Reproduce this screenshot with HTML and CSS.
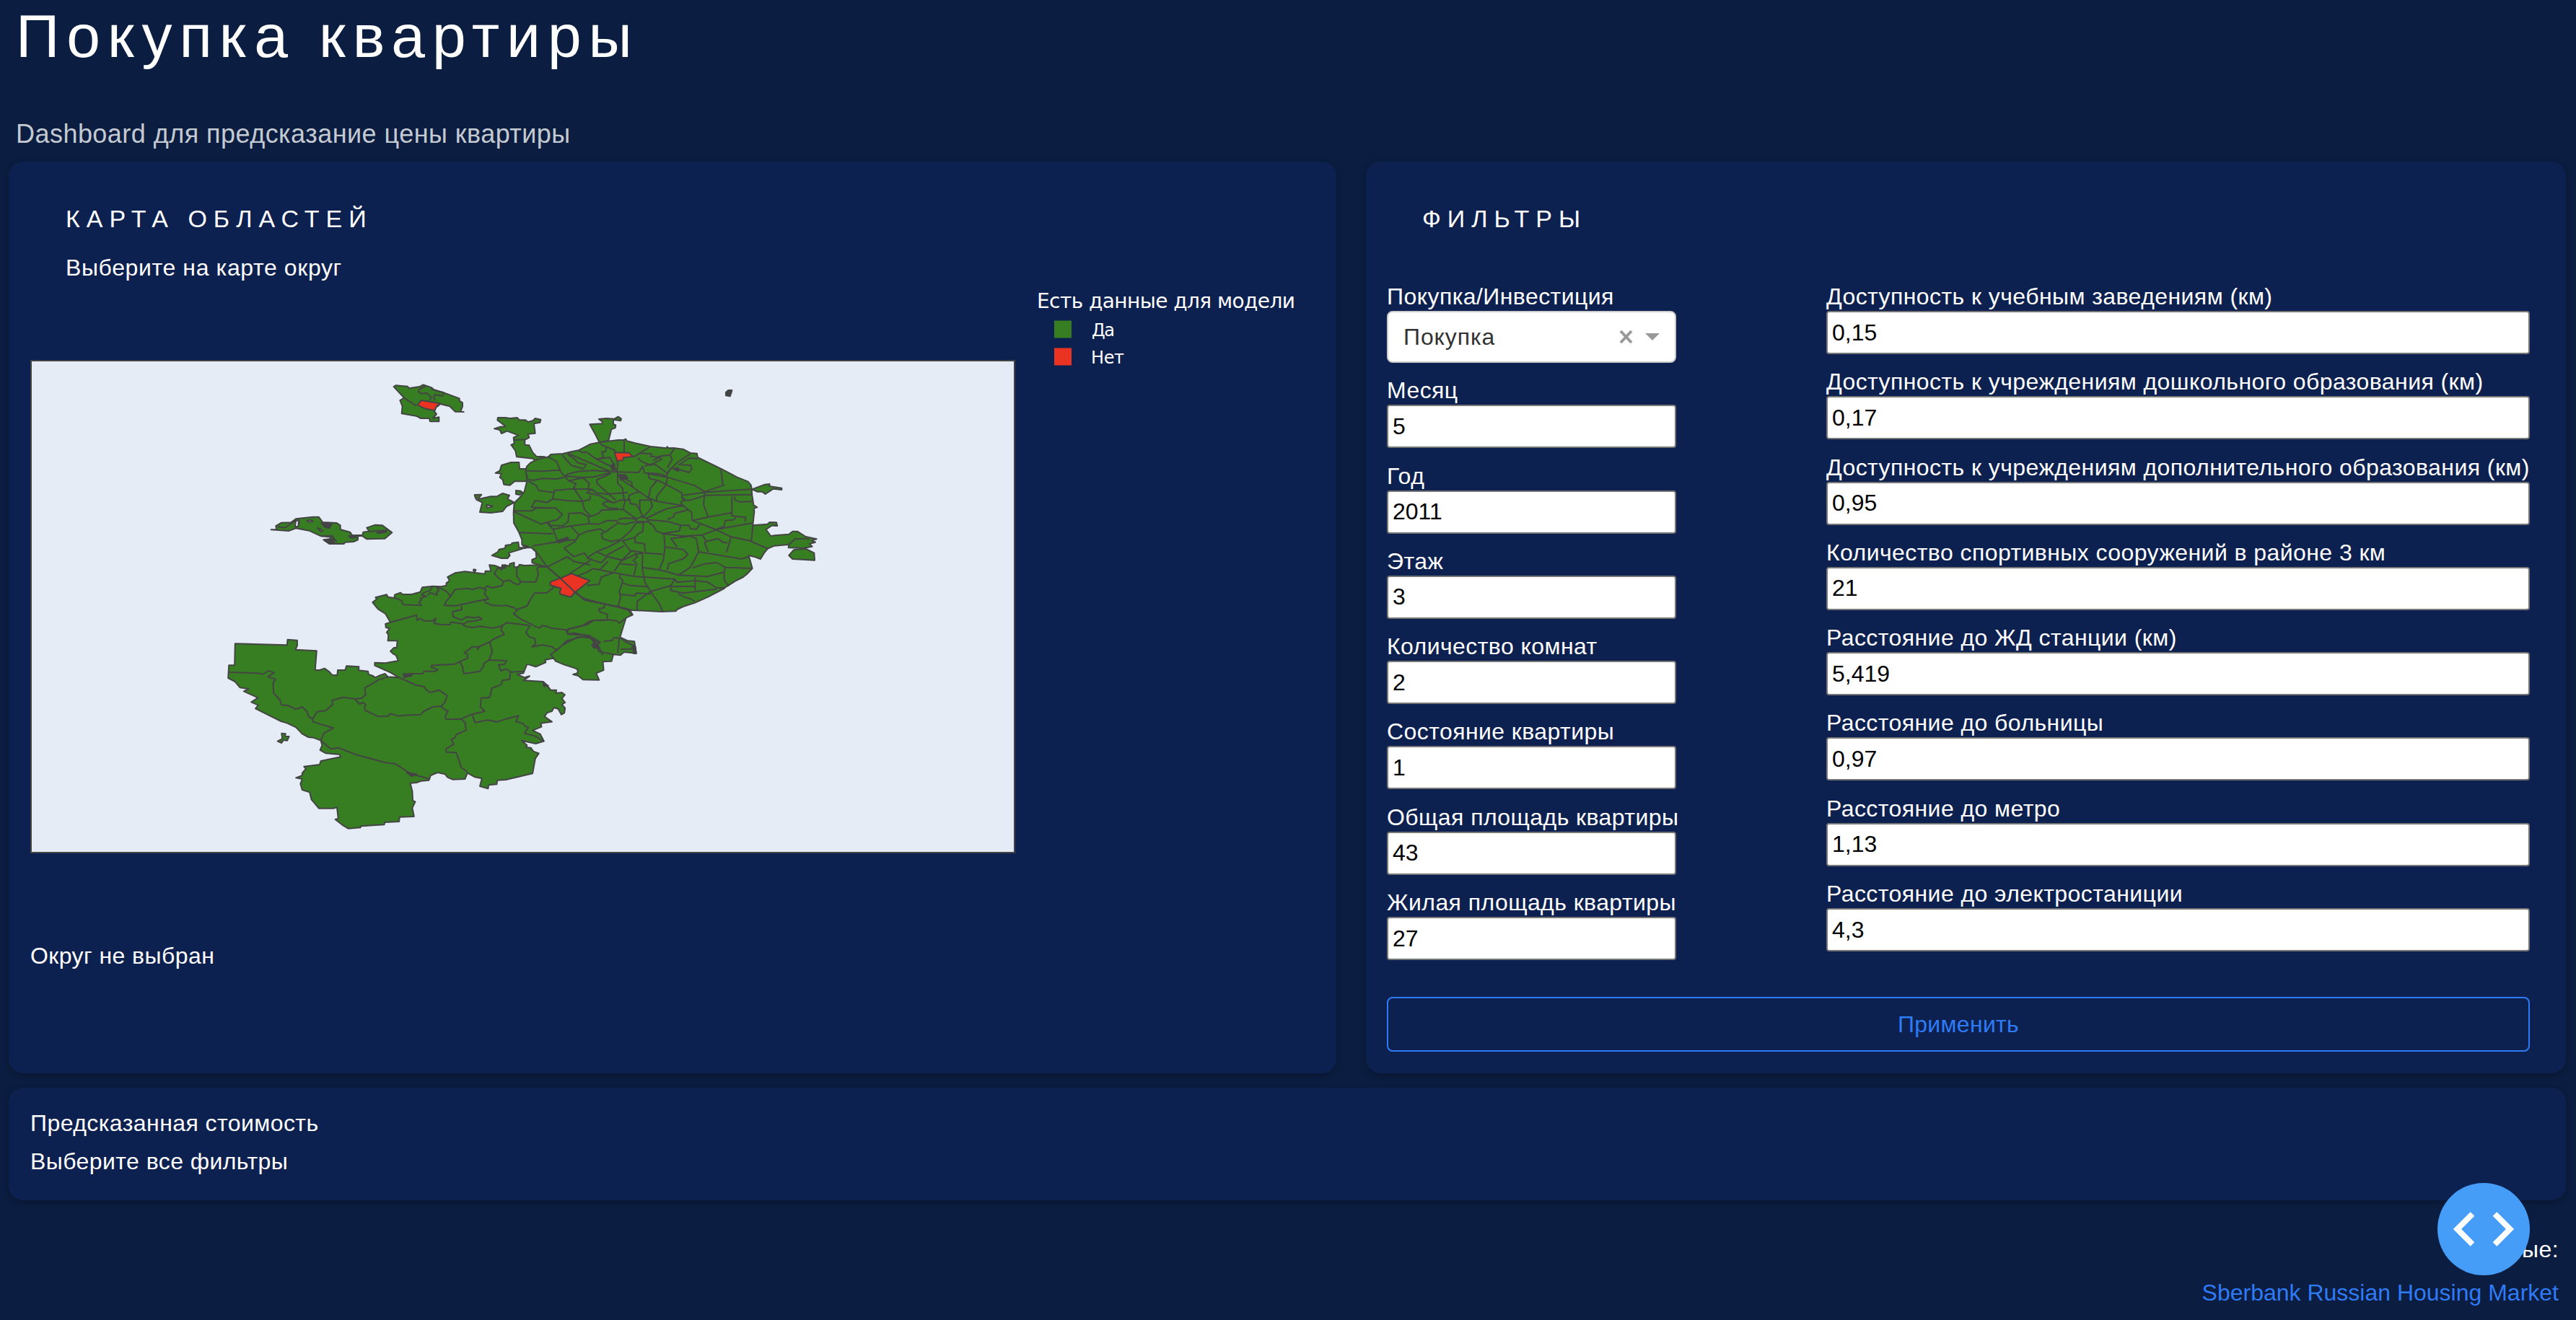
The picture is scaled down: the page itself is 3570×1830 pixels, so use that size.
FILE: index.html
```html
<!DOCTYPE html>
<html lang="ru">
<head>
<meta charset="utf-8">
<title>Покупка квартиры</title>
<link rel="stylesheet" href="styles.css">
</head>
<body>
<header class="header">
  <h1 class="title">Покупка квартиры</h1>
  <p class="subtitle">Dashboard для предсказание цены квартиры</p>
</header>
<main class="main">
  <div class="columns">
    <section class="card map-card">
      <h2 class="heading">КАРТА ОБЛАСТЕЙ</h2>
      <p class="hint">Выберите на карте округ</p>
      <svg class="map" viewBox="42 391 1780 809" role="img">
        <rect class="frame" x="43" y="500" width="1363" height="682"/>
        <!-- south-western districts -->
        <g class="land" transform="translate(300 780) scale(.34439 .33333)">
          <path d="M700,248 680,255 682,270 697,274 685,290 692,300 690,325 728,325 725,355 715,353 700,368 712,380 722,385 732,408 680,418 637,416 637,428 700,457 735,478 690,475 678,462 655,470 640,478 628,470 612,465 610,452 572,448 573,433 523,430 518,447 488,447 486,468 465,467 455,455 435,440 415,447 397,447 403,367 318,362 325,345 325,323 286,320 284,343 75,337 73,427 50,427 47,480 75,495 95,520 130,525 110,535 167,562 140,580 168,593 157,607 260,660 285,668 320,685 345,712 370,726 390,728 420,740 425,760 417,780 440,793 495,798 500,808 420,825 415,840 352,848 360,858 345,875 345,885 320,895 345,900 338,920 345,945 375,955 382,985 412,1022 470,1022 485,1018 490,1065 478,1068 505,1090 530,1106 580,1102 580,1096 675,1090 677,1080 735,1077 737,1058 795,1056 788,1020 800,995 790,990 788,950 780,917 805,915 825,908 855,905 862,885 890,873 920,880 930,893 950,902 1000,900 1010,875 1040,892 1068,898 1060,930 1093,940 1095,925 1128,922 1130,905 1165,903 1272,877 1283,815 1297,793 1275,785 1265,770 1245,768 1250,760 1228,740 1285,753 1318,743 1303,713 1272,698 1308,683 1305,668 1350,662 1320,640 1330,625 1350,618 1358,603 1375,608 1388,632 1400,625 1403,605 1390,590 1403,582 1390,565 1402,550 1390,540 1365,543 1368,530 1345,530 1330,510 1315,495 1235,490 1260,472 1240,478 1210,465 1235,460 1250,422 1285,433 1325,415 1322,405 1345,400 1357,398 1365,410 1400,425 1445,440 1455,447 1452,460 1435,465 1455,470 1475,487 1540,488 1528,460 1558,447 1555,412 1590,410 1597,382 1626,385 1640,372 1689,377 1682,328 1655,325 1624,310 1636,270 1648,230 1675,217 1665,200 1568,170 1400,60 1330,-10 1300,-5 1292,10 1240,12 1220,8 1212,20 1198,18 1198,0 1180,5 1178,15 1160,10 1145,22 1120,12 1098,10 1105,35 1082,35 1080,47 1040,42 1000,37 960,43 930,60 938,75 925,85 925,95 905,100 870,98 828,103 820,122 785,132 750,132 740,125 718,133 715,147 690,143 685,133 640,145 645,152 628,165 650,193 680,213Z"/>
          <path d="M1035,28 1044,30 1040,37 1034,34Z"/>
          <path d="M262,710 278,712 276,722 292,723 285,740 270,738 262,750 246,743 265,732Z"/>
          <path class="line" d="M700,248 805,218 807,240 820,232 835,242 870,242 883,232 875,252 900,257 940,258 942,248 960,250 995,255 1000,265 1030,270 1060,265 1110,272 1145,265 1168,250 1262,262
          M718,147 745,158 750,175 825,178 815,165 825,155 820,148 845,140 825,135 835,125 860,115 870,98
          M850,135 860,125 888,135 885,122 895,118 885,100 925,118 942,140 925,160 917,177 960,180 1095,150 1078,130 1085,112 1060,103 1030,112 1010,107 960,112 942,140
          M985,180 988,195 950,205 952,225 985,238 1010,225 1040,230 1055,225 1068,235 1040,243 1010,245 990,262
          M1078,105 1090,98 1110,105 1150,95 1155,78 1180,73 1195,85 1215,92 1225,80 1285,80 1295,50 1290,20
          M1155,78 1130,60 1118,45 1130,25 1165,22 M1210,15 1208,55 1225,80
          M1075,160 1095,150 M1080,165 1110,178 1150,180 1165,178 1200,188 1210,200 1195,212 1225,235 1275,260
          M1210,195 1250,180 1265,150 1280,127 1330,125 1358,102
          M1150,262 1145,280 1158,298 1115,318 1100,330 1110,370 1097,405 1168,408 1160,422 1135,425 1145,450 1165,442 1185,455 1240,452
          M1100,330 1060,348 1050,362 1055,350 1030,350 997,375 1010,380 1010,398 978,412 990,432 995,462 1060,452 1075,430 1075,420 1097,405
          M978,412 960,422 900,425 865,428 865,435 892,445 880,452 835,452 830,462 790,462 755,470
          M1262,262 1245,290 1260,310 1280,315 1285,335 1270,350 1310,342 1350,350 1360,358 1372,362 1345,382 1357,398
          M1275,262 1300,272 1310,262 1330,265 1345,272 1405,280 1415,297 1440,293 1490,303 1525,325 1545,335
          M1413,297 1413,277 1475,262 1500,245 1520,240 1568,240
          M1372,362 1410,325 1470,308 1510,315 1535,345 1555,385
          M735,478 805,510 835,515 845,530 860,540 895,530 912,542 928,552 920,580 905,597 870,600 835,618 822,632 750,635 730,638 700,628 690,638 650,640 600,615 595,605 600,590 590,582 575,588 557,567 585,563 600,550 597,520 625,505 650,488 690,475
          M905,600 920,612 932,618 920,640 925,652 985,650 1000,665 1005,697 965,715 960,728 945,735 955,755 923,775 925,788 965,790 975,820 985,852 1010,870
          M985,650 1025,632 1080,618 1062,600 1065,563 1100,560 1108,522 1145,508 1150,490 1180,485 1183,455
          M1030,635 1040,665 1090,655 1130,662 1160,652 1215,637 1205,660 1235,670 1240,680 1255,685 1240,710 1285,722 1315,743
          M557,567 510,560 465,573 468,590 440,615 405,620 387,650 370,640 365,620 345,600 320,610 290,595 262,592 255,570 230,543 228,500 238,485 207,475 232,458 210,450 185,465 170,460 50,456
          M387,650 387,662 470,688 432,710 420,740 460,775 490,770 560,798 680,832 720,837 785,880 860,900"/>
          <path class="knot" d="M752,463 785,463 785,470 755,478Z M765,873 805,880 785,888Z M1515,335 1535,340 1535,355Z M1150,10 1168,12 1145,30Z M1315,500 1335,512 1318,515Z"/>
        </g>
        <!-- central districts -->
        <g class="land" transform="translate(680 510) scale(.33333)">
          <path d="M452,310 438,282 412,235 463,232 465,225 450,213 480,210 515,212 530,203 543,212 540,220 510,215 510,235 520,238 518,250 502,255 490,303Z"/>
          <path d="M185,385 175,377 108,370 103,345 85,320 98,315 95,290 115,280 68,263 45,273 38,258 15,253 40,245 62,243 28,217 30,207 60,207 80,210 110,207 120,217 145,217 155,225 175,220 185,210 208,215 205,227 180,232 185,272 155,275 160,290 142,300 142,320 160,322 175,352 190,368 225,370Z"/>
          <path d="M148,420 120,420 118,393 85,393 45,405 38,428 20,437 45,440 38,455 50,465 55,485 80,488 100,472 152,472 148,440Z"/>
          <path d="M98,560 70,545 78,530 50,522 25,535 0,535 -60,548 -35,560 -45,600 0,603 50,597 65,577Z"/>
          <path d="M105,510 125,512 132,518 120,528 105,525Z"/>
          <path d="M145,748 118,748 115,725 90,728 85,735 62,738 60,750 35,755 30,765 5,780 45,792 70,792 80,780 75,770Z"/>
          <path d="M1087,505 1100,500 1140,485 1160,483 1158,492 1210,500 1210,507 1175,503 1142,525 1128,515 1108,515Z"/>
          <path d="M1090,655 1150,650 1160,642 1188,643 1192,657 1170,655 1145,672 1165,700 1180,697 1240,692 1255,680 1275,680 1310,702 1355,712 1335,718 1350,725 1325,732 1337,743 1300,750 1238,748 1240,735 1180,740 1152,752 1082,722Z"/>
          <path d="M1260,757 1310,752 1345,770 1347,800 1255,795 1240,780Z"/>
          <path d="M452,310 480,306 530,300 553,300 562,296 566,304 600,313 665,327 730,334 734,328 740,334 760,333 800,338 830,354 858,356 860,372 955,418 1025,455 1070,473 1082,487 1085,500 1087,530 1093,570 1108,580 1095,584 1096,600 1093,625 1090,655 1086,700 1082,722 1152,752 1137,770 1122,795 1100,787 1073,780 1080,805 1088,834 1065,858 1050,870 1020,885 980,910 970,918 905,952 850,977 800,993 775,1005 770,1012 710,1014 640,1010 585,1008 540,995 390,965 290,875 235,828 195,818 172,810 172,798 190,790 188,765 170,748 145,748 130,735 130,715 118,685 96,645 95,600 98,562 120,540 140,515 150,475 152,450 145,432 150,410 165,395 190,382 240,370 250,360 300,357 338,348 365,343 415,317Z"/>
          <path class="line" d="M452,310 460,320 515,342 522,365 528,400 525,432 M555,302 555,350 M320,355 500,432 M365,343 382,352 398,350 440,380 520,420 M438,380 470,373 462,350 478,348 480,330 M440,380 495,372 512,400 505,415
          M240,370 275,390 290,430 305,448 325,470 355,482 345,500 380,550 390,590 418,618 M150,428 210,430 290,425 M297,362 335,405 385,420 398,402 362,395 350,380 320,360
          M155,465 180,467 215,460 275,462 305,455 320,442 370,430 430,427 500,432 615,435 632,410 640,437 700,440 730,450 750,415 M310,450 385,456 430,453 500,436 M385,458 410,480 405,505 340,503 265,510 258,545 235,560 185,552 170,580 270,583 298,610 275,632 235,642
          M155,470 190,490 200,510 262,518 M325,470 360,462 385,458 M442,465 500,440 M442,465 442,480 485,520 520,550 M555,548 548,500 528,480 528,432 M528,440 545,465 655,540 690,555 800,573 835,600 838,635 M345,503 420,505 440,520 480,525 570,518 M420,505 400,520 450,530 510,562 540,550 580,550 580,565 605,568 625,600
          M260,545 320,552 380,555 412,548 415,530 M95,595 170,595 190,583 250,583 M95,597 210,650 235,642 250,655 300,657 322,640 325,605 375,603 410,620 M410,620 450,605 460,592 550,588 605,628 M405,620 410,648 330,658 255,672 M235,645 260,672 278,722 M118,685 260,690
          M330,655 367,695 355,715 300,720 175,740 M367,695 400,680 455,670 470,680 M410,648 450,650 485,635 525,635 530,645 480,680 460,690 465,710 500,722 540,715 580,680 605,645 655,640 M530,630 560,625 600,628 M530,645 560,650 600,640 M550,590 560,550 575,545 575,530 600,520 620,515 M465,565 490,583 530,585 M465,565 480,555 510,560
          M620,550 620,590 632,620 655,600 672,575 665,550Z M655,545 665,500 695,465 M690,555 690,535 730,485 735,455 655,440 660,460 700,470 730,485 795,520 795,540 805,545 790,560 800,573 M735,455 850,490 890,515 885,570 905,620 M800,530 885,518 950,513 1087,505 M890,530 1087,527 M890,515 970,488 965,485 957,420 M800,552 830,550 885,533
          M1003,535 1003,615 1060,622 1058,640 M1015,535 1015,550 1040,558 1087,555 M905,620 1000,603 M650,625 700,600 735,585 800,573 M650,632 700,635 740,640 790,655 785,678 710,690 M735,630 760,620 765,605 820,590 M838,635 905,620 M838,635 935,672 1090,645 M790,655 825,655 830,668 855,672 870,650 M935,672 1000,703 1082,720 M945,668 970,660 975,635 1010,632 1020,622
          M600,630 610,640 655,640 650,625 625,620Z M635,645 632,680 612,692 600,705 545,720 M655,640 675,655 690,680 720,690 725,745 718,800 700,840 M600,705 600,725 640,732 642,770 715,775 M540,718 500,740 440,765 400,790 M550,720 580,760 632,768 630,830 640,890 665,930 700,980 715,1012
          M480,785 490,775 555,740 M440,765 485,785 550,800 605,775 632,770 M585,762 545,800 515,845 M400,790 440,805 460,810 485,785 M488,805 455,838 M540,815 600,820 M425,835 500,850 600,868 765,878 750,905 665,930 610,970 608,1008 M425,835 400,850 360,865 M600,770 610,785 593,800 607,815 595,865
          M725,745 800,755 820,775 805,792 740,815 735,840 M632,830 700,840 740,850 780,862 900,868 970,850 975,830 1088,834 M780,862 830,830 865,765 855,710 830,700 750,710 775,745 M840,832 890,815 940,810 975,830 M865,765 1015,790 1040,795 1075,785 M720,690 800,700 880,695 935,675 M880,695 895,720 890,730 905,765 M895,722 945,710 965,725 985,728 M1000,703 980,768
          M745,910 755,930 M765,878 775,892 850,885 900,890 940,915 975,915 M745,925 800,937 940,920 M745,910 850,908 M850,870 850,925 M970,850 972,885 990,908 M780,940 810,955 830,960 850,972 M540,860 535,870 550,885 535,930 540,955 530,990 M548,895 580,905 650,910 M535,942 600,948 605,937 665,940
          M170,748 190,765 235,828 290,875 350,930 390,965 540,995 585,1008 M195,828 235,828 320,785 345,805 415,820 M415,800 330,855 M305,750 345,785 390,770 400,785 M305,750 355,720 M400,905 450,900 460,870 510,852
          M640,408 670,400 690,405 730,435 M595,370 665,327 M620,355 670,358 665,368 700,372 675,385 M612,375 625,388 665,405 710,380 700,368 745,362 765,335 M745,362 755,380 735,415 M780,422 825,435 837,420 832,405 790,403 M730,440 780,390 830,358 M780,405 825,375 860,378 M545,455 585,475 590,495 M320,785 325,795"/>
          <path class="knot" d="M500,405 515,400 515,418 525,425 505,425Z M760,420 780,415 780,430Z M535,445 560,445 570,460 540,465Z M275,720 320,705 325,715 285,727Z M135,738 155,742 145,750Z"/>
          <path class="red" d="M515,352 575,353 592,370 552,373 550,385 525,387Z"/>
          <path class="red" d="M335,855 412,885 355,930 348,935 335,953 320,950 287,940 288,928 293,918 248,903 248,890 290,875Z M290,875 350,932"/>
          <path class="knot" d="M978,102 988,93 1003,93 1000,105 995,118 978,115Z"/>
          <path class="line" d="M1170,655 1188,657 M1240,735 1265,712 1310,710 1325,715 M95,300 142,298"/>
        </g>
        <!-- south-eastern edge -->
        <g class="land" transform="translate(780 820) scale(.33333)">
          <path class="line" d="M50,5 90,30 165,50 230,65 270,75 288,97 M175,55 170,68 150,72 155,85 185,95 185,118 225,122 235,132 262,110 M185,118 130,120 100,138 20,158 20,178 110,183 155,210 140,225 150,250 210,262 M0,222 60,190 110,190 155,235 M170,208 205,203 212,192 235,195 228,255 M240,192 262,210 295,225 282,240 240,240"/>
          <path class="knot" d="M120,222 145,222 150,235 130,235Z M290,225 302,230 305,258 295,258Z"/>
        </g>
        <!-- western exclaves -->
        <g class="land" transform="translate(360 500) scale(.33333)">
          <path d="M557,108 565,103 615,107 620,115 665,108 680,100 715,112 725,122 765,133 830,157 830,167 843,175 843,190 835,212 848,213 812,212 790,190 750,180 740,190 730,193 722,207 735,222 720,240 745,235 745,253 708,253 705,240 670,240 650,230 590,220 593,190 583,165 600,155Z"/>
          <path class="line" d="M600,155 650,187 M690,105 662,120 660,130 672,137 695,135 712,152 708,165 M712,117 765,133 760,147 728,142 722,152 730,165"/>
          <path class="red" d="M655,185 672,165 750,178 735,190 728,207 690,200Z"/>
          <path d="M47,703 70,703 67,687 90,674 130,673 150,658 220,650 245,650 262,672 320,675 335,685 335,702 375,713 385,727 427,725 430,713 455,710 445,695 480,683 510,685 550,715 520,740 445,742 425,728 408,730 408,745 390,753 355,755 350,762 290,762 265,745 300,740 290,733 255,730 205,707 150,697 120,708Z"/>
          <path class="line" d="M75,690 105,695 150,665 M255,730 300,728 320,755 M455,710 530,705 M165,665 160,690"/>
          <path class="knot" d="M255,675 300,680 290,697 270,692Z M370,730 395,727 400,735 380,738Z M270,748 305,742 310,760 290,762Z"/>
          <path class="gap" d="M150,667 162,663 160,690 146,690Z M196,665 215,662 220,668 205,671Z M240,695 262,706 255,712Z M487,715 527,707 525,713 495,718Z"/>
          <path d="M893,558 922,557 912,570 897,572Z"/>
          <path class="gap" d="M943,600 970,605 945,613Z"/>
        </g>
        <g class="legend">
          <text class="legend-title" x="1437" y="427" textLength="358">Есть данные для модели</text>
          <rect class="swatch yes" x="1461" y="444.500" width="24" height="24"/>
          <text class="legend-item" x="1513" y="466" textLength="32">Да</text>
          <rect class="swatch no" x="1461" y="482.500" width="24" height="24"/>
          <text class="legend-item" x="1512" y="504" textLength="46">Нет</text>
        </g>
      </svg>
      <p class="picked">Округ не выбран</p>
    </section>
    <section class="card filters">
      <h2 class="heading">ФИЛЬТРЫ</h2>
      <div class="fields">
        <div class="field-column">
          <div class="field">
            <span class="label">Покупка/Инвестиция</span>
            <div class="select">
              <span>Покупка</span>
              <svg class="select-icons" viewBox="0 0 56 20"><path class="clear" d="M2,2 17,18M17,2 2,18"/><path class="arrow" d="M36,5H56L46,15Z"/></svg>
            </div>
          </div>
          <label class="field"><span class="label">Месяц</span><input class="input" value="5"></label>
          <label class="field"><span class="label">Год</span><input class="input" value="2011"></label>
          <label class="field"><span class="label">Этаж</span><input class="input" value="3"></label>
          <label class="field"><span class="label">Количество комнат</span><input class="input" value="2"></label>
          <label class="field"><span class="label">Состояние квартиры</span><input class="input" value="1"></label>
          <label class="field"><span class="label">Общая площадь квартиры</span><input class="input" value="43"></label>
          <label class="field"><span class="label">Жилая площадь квартиры</span><input class="input" value="27"></label>
        </div>
        <div class="field-column">
          <label class="field"><span class="label">Доступность к учебным заведениям (км)</span><input class="input" value="0,15"></label>
          <label class="field"><span class="label">Доступность к учреждениям дошкольного образования (км)</span><input class="input" value="0,17"></label>
          <label class="field"><span class="label">Доступность к учреждениям дополнительного образования (км)</span><input class="input" value="0,95"></label>
          <label class="field"><span class="label">Количество спортивных сооружений в районе 3 км</span><input class="input" value="21"></label>
          <label class="field"><span class="label">Расстояние до ЖД станции (км)</span><input class="input" value="5,419"></label>
          <label class="field"><span class="label">Расстояние до больницы</span><input class="input" value="0,97"></label>
          <label class="field"><span class="label">Расстояние до метро</span><input class="input" value="1,13"></label>
          <label class="field"><span class="label">Расстояние до электростаниции</span><input class="input" value="4,3"></label>
        </div>
      </div>
      <button class="apply">Применить</button>
    </section>
  </div>
  <section class="card result">
    <p>Предсказанная стоимость</p>
    <p>Выберите все фильтры</p>
  </section>
</main>
<footer class="footer">
  <p>Данные:</p>
  <a class="source">Sberbank Russian Housing Market</a>
</footer>
<div class="debug">
  <svg viewBox="0 0 128 128"><path d="M48.500,43 27.500,64 48.500,85M79.500,43 100.500,64 79.500,85"/></svg>
</div>
</body>
</html>
```
FILE: styles.css
```css
* { box-sizing: border-box; }
body {
  margin: 0;
  height: 1830px;
  overflow: hidden;
  background: #0b1d40;
  color: #fff;
  font: 32px/40px "Liberation Sans", Arial, sans-serif;
  letter-spacing: .43px;
}
h1, h2, p { margin: 0; font-weight: 400; }
.header { padding: 3px 22px 16px; }
.title { font-size: 84px; line-height: 94px; letter-spacing: 9.9px; }
.subtitle { margin-top: 67px; font-size: 36px; line-height: 44px; letter-spacing: .46px; color: #c4cad2; }
.main { padding: 0 14px 0 12px; }
.columns { display: grid; grid-template-columns: 1840px 1fr; gap: 41px; height: 1264px; }
.card { background: #0d2150; border-radius: 20px; box-shadow: 0 3px 8px rgba(0, 0, 0, .28); }
.map-card { padding: 59px 30px 0; }
.heading { margin-left: 49px; font-size: 34px; line-height: 40px; letter-spacing: 9px; }
.hint { margin: 28px 0 0 49px; letter-spacing: .62px; }
.map { display: block; width: 1780px; height: 809px; }
.picked { margin-top: 105px; }

.frame { fill: #e5ecf6; stroke: #444; stroke-width: 2; }
.land path { fill: #377e22; stroke: #444; stroke-width: 2; stroke-linejoin: round; vector-effect: non-scaling-stroke; }
.land .line { fill: none; }
.land .knot { fill: #444; }
.land .red { fill: #ea3323; }
.land .gap { fill: #e5ecf6; }
.legend text { fill: #fff; font-family: "DejaVu Sans", Verdana, sans-serif; letter-spacing: 0; }
.legend-title { font-size: 28px; }
.legend-item { font-size: 24px; }
.swatch.yes { fill: #377e22; }
.swatch.no { fill: #ea3323; }

.filters { padding: 59px 50px 0 29px; }
.fields { display: grid; grid-template-columns: 401px 975px; justify-content: space-between; margin-top: 68px; }
.field-column { display: flex; flex-direction: column; gap: 18.3px; }
.field { display: block; }
.label { display: block; white-space: nowrap; }
.input {
  display: block;
  width: 100%;
  height: 60px;
  padding: 0 6px;
  border: 2px solid #767676;
  border-radius: 4px;
  background: #fff;
  color: #000;
  font: 32px "Liberation Sans", Arial, sans-serif;
}
.select {
  display: flex;
  align-items: center;
  justify-content: space-between;
  height: 72px;
  padding: 0 21px;
  border: 2px solid #ccc;
  border-radius: 8px;
  background: #fff;
  color: #333;
  letter-spacing: .9px;
}
.select-icons { width: 56px; height: 20px; }
.clear { fill: none; stroke: #999; stroke-width: 4; }
.arrow { fill: #999; }
.apply {
  display: block;
  width: 100%;
  height: 76px;
  margin-top: 51px;
  border: 2px solid #2f7bf6;
  border-radius: 8px;
  background: none;
  color: #2f7bf6;
  font: 32px "Liberation Sans", Arial, sans-serif;
  letter-spacing: .3px;
}
.result { height: 156px; margin-top: 20px; padding: 29px 30px; }
.result p + p { margin-top: 13px; }
.footer { display: flex; flex-direction: column; align-items: flex-end; gap: 20px; padding: 48px 24px 0 0; }
.source { color: #2f7bf6; letter-spacing: 0; }
.debug {
  position: absolute;
  left: 3378px;
  top: 1640px;
  width: 128px;
  height: 128px;
  border-radius: 50%;
  background: #459df8;
}
.debug path { fill: none; stroke: #fff; stroke-width: 8; }
```
